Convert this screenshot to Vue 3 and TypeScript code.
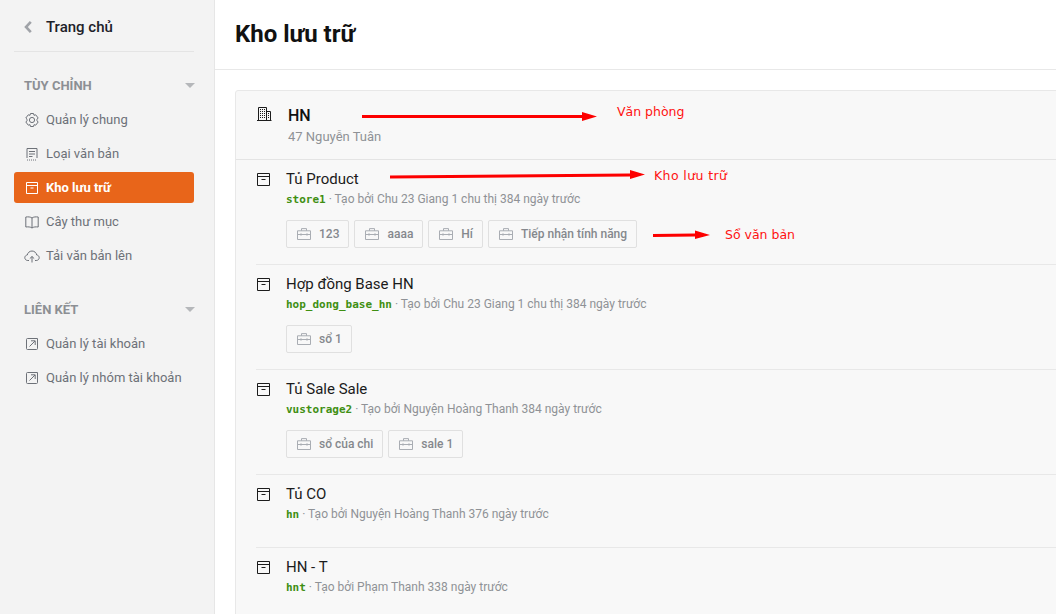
<script setup lang="ts">
interface Item {
  label: string;
  icon: string;
  active?: boolean;
}

interface Store {
  name: string;
  code: string;
  meta: string;
  books: string[];
}

const customItems: Item[] = [
  { label: "Quản lý chung", icon: "gear" },
  { label: "Loại văn bản", icon: "doc" },
  { label: "Kho lưu trữ", icon: "box", active: true },
  { label: "Cây thư mục", icon: "book" },
  { label: "Tải văn bản lên", icon: "cloud" },
];

const linkItems: Item[] = [
  { label: "Quản lý tài khoản", icon: "link" },
  { label: "Quản lý nhóm tài khoản", icon: "link" },
];

const stores: Store[] = [
  { name: "Tủ Product", code: "store1", meta: "Tạo bởi Chu 23 Giang 1 chu thị 384 ngày trước", books: ["123", "aaaa", "Hí", "Tiếp nhận tính năng"] },
  { name: "Hợp đồng Base HN", code: "hop_dong_base_hn", meta: "Tạo bởi Chu 23 Giang 1 chu thị 384 ngày trước", books: ["sổ 1"] },
  { name: "Tủ Sale Sale", code: "vustorage2", meta: "Tạo bởi Nguyện Hoàng Thanh 384 ngày trước", books: ["sổ của chi", "sale 1"] },
  { name: "Tủ CO", code: "hn", meta: "Tạo bởi Nguyện Hoàng Thanh 376 ngày trước", books: [] },
  { name: "HN - T", code: "hnt", meta: "Tạo bởi Phạm Thanh 338 ngày trước", books: [] },
];
</script>

<template>
  <div class="page">
    <aside class="sidebar">
      <div class="back">
        <svg class="chev" width="10" height="14" viewBox="0 0 10 14"><path d="M7.8 1.8 L3 7 L7.8 12.2" fill="none" stroke="#a0a3a8" stroke-width="2.6" /></svg>
        <span>Trang chủ</span>
      </div>

      <div class="group-title"><span>TÙY CHỈNH</span><i class="caret"></i></div>
      <div v-for="item in customItems" :key="item.label" class="nav" :class="{ active: item.active }">
        <svg class="nav-icon" width="16" height="16" viewBox="0 0 16 16" fill="none" stroke="currentColor" stroke-width="1">
          <template v-if="item.icon === 'gear'">
            <path d="M6.5 1.5 H9.5 L10 3.3 L11.7 2.8 L14.2 6 L13 7.2 V8.8 L14.2 10 L11.7 13.2 L10 12.7 L9.5 14.5 H6.5 L6 12.7 L4.3 13.2 L1.8 10 L3 8.8 V7.2 L1.8 6 L4.3 2.8 L6 3.3 Z" />
            <circle cx="8" cy="8" r="2.6" />
          </template>
          <template v-else-if="item.icon === 'doc'">
            <path d="M3 12 V2.5 H13 V12" />
            <path d="M5 5.5 H11 M5 8 H11 M5 10.5 H8.5" />
            <path d="M3 14 H13" stroke-dasharray="1 1" />
          </template>
          <template v-else-if="item.icon === 'box'">
            <path d="M2.5 2.5 H13.5 V13.5 H2.5 Z M2.5 5.5 H13.5 M6.5 8 H9.5" />
          </template>
          <template v-else-if="item.icon === 'book'">
            <path d="M8 4 C6.5 2.8 4 2.7 1.8 3 V13 C4 12.7 6.5 12.8 8 14 C9.5 12.8 12 12.7 14.2 13 V3 C12 2.7 9.5 2.8 8 4 Z M8 4 V14" />
          </template>
          <template v-else>
            <path d="M5 12.5 H3.8 C2 12.5 .8 11.2 .8 9.7 C.8 8.2 2 7.1 3.3 7 C3.6 4.8 5.6 3 8 3 C10.4 3 12.4 4.8 12.7 7 C14 7.1 15.2 8.2 15.2 9.7 C15.2 11.2 14 12.5 12.2 12.5 H11 M8 14.5 V8.5 M5.8 10.6 L8 8.5 L10.2 10.6" />
          </template>
        </svg>
        <span>{{ item.label }}</span>
      </div>

      <div class="group-title second"><span>LIÊN KẾT</span><i class="caret"></i></div>
      <div v-for="item in linkItems" :key="item.label" class="nav">
        <svg class="nav-icon" width="16" height="16" viewBox="0 0 16 16" fill="none" stroke="currentColor" stroke-width="1">
          <path d="M9 2.5 H3.5 A1 1 0 0 0 2.5 3.5 V12.5 A1 1 0 0 0 3.5 13.5 H12.5 A1 1 0 0 0 13.5 12.5 V2.5 H9 M5.5 10.5 L11 5 M7 4.8 H11.2 V9" />
        </svg>
        <span>{{ item.label }}</span>
      </div>
    </aside>

    <main class="main">
      <header class="top">Kho lưu trữ</header>
      <div class="content">
        <section class="card">
          <div class="office">
            <svg class="office-icon" width="16" height="16" viewBox="0 0 16 16" fill="none" stroke="#1c1c1c" stroke-width="1">
              <path d="M2.5 14.5 V1.5 H10.5 V14.5 M10.5 5.5 H14.5 V14.5 M1 14.5 H15.5" />
              <path d="M4 3.5 H9 M4 5.5 H9 M4 7.5 H9 M4 9.5 H9 M4 11.5 H9 M12 7.5 H13.5 M12 9.5 H13.5 M12 11.5 H13.5" stroke-dasharray="1 1" stroke-width="1.2" />
            </svg>
            <div>
              <div class="office-name">HN</div>
              <div class="office-addr">47 Nguyễn Tuân</div>
            </div>
          </div>

          <div v-for="store in stores" :key="store.code" class="store">
            <svg class="store-icon" width="16" height="16" viewBox="0 0 16 16" fill="none" stroke="#1c1c1c" stroke-width="1">
              <path d="M1.5 2.5 H13.5 V14.5 H1.5 Z M1.5 5.5 H13.5 M5.5 8.5 H9.5" />
            </svg>
            <div class="store-body">
              <div class="store-name">{{ store.name }}</div>
              <div class="store-meta"><code>{{ store.code }}</code> · {{ store.meta }}</div>
              <div v-if="store.books.length" class="books">
                <div v-for="book in store.books" :key="book" class="book">
                  <svg width="14" height="12" viewBox="0 0 14 12" fill="none" stroke="#a9adb3" stroke-width="1">
                    <path d="M.5 2.8 H13.5 V11.5 H.5 Z M4.5 2.8 V.6 H9.5 V2.8 M.5 6.5 H13.5 M4 5.3 V7.7 M10 5.3 V7.7" />
                  </svg>
                  <span>{{ book }}</span>
                </div>
              </div>
            </div>
          </div>
        </section>
      </div>

      <div class="note n1">Văn phòng</div>
      <div class="note n2">Kho lưu trữ</div>
      <div class="note n3">Sổ văn bản</div>
      <svg class="arrows" width="841" height="260" viewBox="0 0 841 260" fill="#fd0000">
        <path d="M147 115 H367 V112 L382 116.5 L367 121 V118 H147 Z" />
        <path d="M175 175.5 L415 173.5 V170 L430 174.5 L415 179 V176.5 L175 178.5 Z" />
        <path d="M438 234 L480 233.5 V230.5 L495 235 L480 239 V236.5 L438 237 Z" />
      </svg>
    </main>
  </div>
</template>

<style>
html,
body {
  margin: 0;
  overflow: hidden;
  background: #fff;
}
</style>

<style scoped>
.page {
  display: flex;
  width: 1056px;
  height: 614px;
  overflow: hidden;
  font-family: Roboto, "Liberation Sans", sans-serif;
}

.sidebar {
  flex: none;
  box-sizing: border-box;
  width: 215px;
  height: 614px;
  padding: 0 20px 0 14px;
  background: #f3f3f3;
  border-right: 1px solid #e6e6e6;
}

.back {
  display: flex;
  align-items: center;
  box-sizing: border-box;
  height: 52px;
  padding: 2px 0 0 9px;
  border-bottom: 1px solid #e4e4e4;
  color: #1d2129;
  font-size: 15px;
  font-weight: 500;
}

.chev {
  margin-right: 13px;
}

.group-title {
  display: flex;
  align-items: center;
  justify-content: space-between;
  margin-top: 16px;
  margin-bottom: 2px;
  height: 34px;
  padding-left: 10px;
  color: #8c8f94;
  font-size: 13px;
  font-weight: 700;
}

.group-title.second {
  margin-top: 21px;
}

.caret {
  border-left: 5px solid transparent;
  border-right: 5px solid transparent;
  border-top: 5px solid #b5b7ba;
  margin-right: -1px;
}

.nav {
  display: flex;
  align-items: center;
  height: 31px;
  margin-bottom: 3px;
  padding-left: 10px;
  color: #6d7178;
  font-size: 13px;
  border-radius: 3px;
}

.nav-icon {
  flex: none;
  margin-right: 6px;
}

.nav.active {
  background: #e8651a;
  color: #fff;
  font-weight: 700;
}

.main {
  position: relative;
  flex: none;
  width: 841px;
}

.top {
  box-sizing: border-box;
  height: 70px;
  padding: 20px 0 0 20px;
  border-bottom: 1px solid #e8e8e8;
  color: #111;
  font-size: 24px;
  line-height: 29px;
  font-weight: 700;
}

.content {
  padding: 20px 0 0 20px;
}

.card {
  box-sizing: border-box;
  width: 860px;
  border: 1px solid #e8e8e8;
  border-radius: 3px;
  background: #f8f8f8;
}

.office {
  display: flex;
  height: 68px;
  padding: 0 0 0 20px;
  border-bottom: 1px solid #e4e4e4;
}

.office-icon {
  margin: 15px 16px 0 0;
}

.office-name {
  margin-top: 15px;
  color: #111;
  font-size: 16px;
  line-height: 20px;
  font-weight: 500;
}

.office-addr {
  margin-top: 2px;
  color: #8f9296;
  font-size: 13px;
  line-height: 17px;
}

.store {
  display: flex;
  margin-left: 20px;
  padding: 10px 0 16px;
  border-bottom: 1px solid #e8e8e8;
}

.store-icon {
  flex: none;
  margin: 1px 14px 0 0;
}

.store-name {
  color: #1b1b1b;
  font-size: 15px;
  line-height: 19px;
}

.store-meta {
  margin: 2px 0 8px;
  color: #8f9296;
  font-size: 12px;
  line-height: 16px;
}

.store-meta code {
  color: #3f8f12;
  font-family: "DejaVu Sans Mono", "Liberation Mono", monospace;
  font-size: 11px;
  font-weight: 700;
}

.books {
  display: flex;
  gap: 5px;
  margin-top: 12px;
}

.book {
  display: flex;
  align-items: center;
  box-sizing: border-box;
  height: 28px;
  padding: 0 9px 0 10px;
  border: 1px solid #e0e0e0;
  border-radius: 2px;
  color: #85888d;
  font-size: 12px;
  font-weight: 500;
}

.book svg {
  margin-right: 8px;
}

.note {
  position: absolute;
  color: #f11;
  font-family: "DejaVu Sans", sans-serif;
  font-size: 12.5px;
  line-height: 16px;
  white-space: nowrap;
}

.n1 {
  left: 402px;
  top: 104px;
}

.n2 {
  left: 439px;
  top: 168px;
  letter-spacing: 0.4px;
}

.n3 {
  left: 510px;
  top: 227px;
}

.arrows {
  position: absolute;
  left: 0;
  top: 0;
  pointer-events: none;
}
</style>
